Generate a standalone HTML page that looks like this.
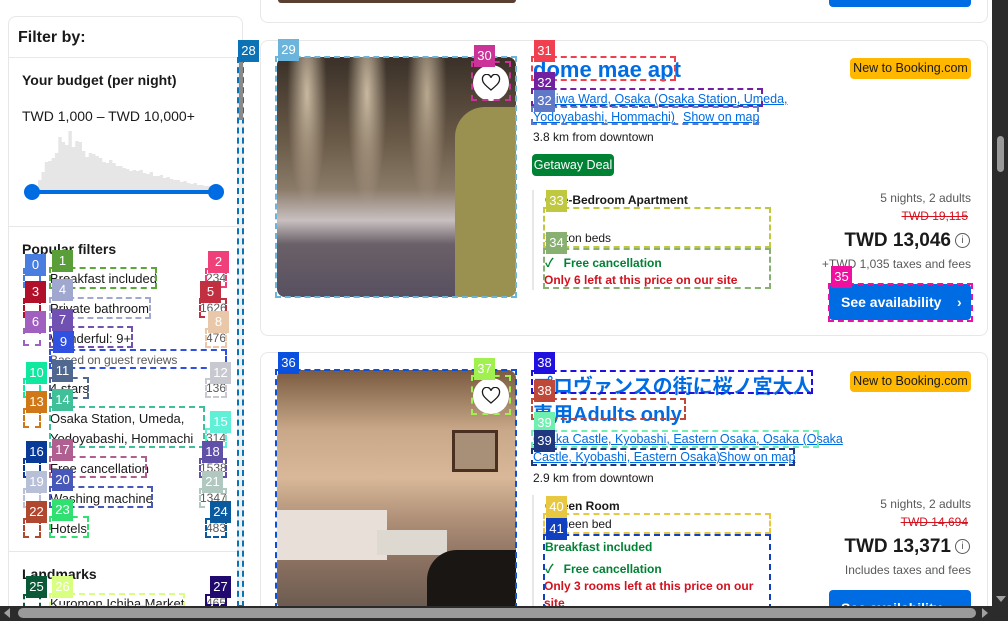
<!DOCTYPE html>
<html style="overflow:hidden;height:621px"><head><meta charset="utf-8">
<style>
*{box-sizing:border-box;margin:0;padding:0}
body{width:1008px;height:621px;overflow:hidden;background:#fff;font-family:"Liberation Sans","Noto Sans CJK JP",sans-serif;color:#1a1a1a;position:relative}
.a{position:absolute;white-space:nowrap}
.lb{position:absolute;width:21px;height:22px;color:#fff;font-size:13px;line-height:22px;text-align:center;z-index:5}
.bx{position:absolute;border:2px dashed;z-index:4}
.t{font-size:13px}
.b{font-weight:bold}
.lnk{color:#006ce4;text-decoration:underline;font-size:12.5px}
.gr{color:#595959;font-size:12px}
.grn{color:#008234;font-weight:bold;font-size:12px}
.red{color:#d4111e;font-weight:bold;font-size:12px}
.btn{position:absolute;background:#006ce4;color:#fff;font-weight:bold;font-size:14px;border-radius:4px;padding-left:12px;line-height:36px}
.badge{position:absolute;background:#ffb700;border-radius:4px;font-size:12.5px;color:#1a1a1a;text-align:center;line-height:21px}
.heart{position:absolute;width:36px;height:36px;border-radius:50%;background:#fff;z-index:3}
</style></head><body>

<div class="a" style="left:260px;top:-20px;width:728px;height:43px;border:1px solid #e7e7e7;border-radius:8px"></div>
<div class="a" style="left:278px;top:0;width:238px;height:3px;background:#5a4030;border-radius:0 0 6px 6px"></div>
<div class="a" style="left:829px;top:0;width:142px;height:7px;background:#006ce4;border-radius:0 0 4px 4px"></div>

<div class="a" style="left:8px;top:16px;width:235px;height:620px;border:1px solid #e7e7e7;border-radius:8px"></div>
<div class="a b" style="left:18px;top:29px;font-size:16px">Filter by:</div>
<div class="a" style="left:9px;top:57px;width:233px;height:1px;background:#e7e7e7"></div>
<div class="a b" style="left:22px;top:72px;font-size:14px">Your budget (per night)</div>
<div class="a" style="left:22px;top:108px;font-size:14px">TWD 1,000 – TWD 10,000+</div>
<svg class="a" style="left:38px;top:128px" width="186" height="64" viewBox="0 0 165 64" preserveAspectRatio="none">
<path fill="#e6e6e6" d="M0 64V52h3V44h3V34h3V33h3V30h3V25h3V9h3V14h3V17h3V3h3V19h3V13h3V14h3V23h3V29h3V25h3V26h3V28h3V30h3V34h3V35h3V32h3V35h3V38h3V38h3V40h3V41h3V43h3V42h3V43h3V42h3V45h3V46h3V44h3V48h3V48h3V47h3V50h3V49h3V51h3V52h3V52h3V54h3V53h3V55h3V56h3V55h3V57h3V57h3V58h3V58h3V59h3V59h3V60h3V60h3V61h3V61h3V61h3V62h3V62h3V62h3V64z"/>
</svg>
<div class="a" style="left:32px;top:190px;width:184px;height:4px;background:#006ce4"></div>
<div class="a" style="left:24px;top:184px;width:16px;height:16px;border-radius:50%;background:#006ce4"></div>
<div class="a" style="left:208px;top:184px;width:16px;height:16px;border-radius:50%;background:#006ce4"></div>
<div class="a" style="left:9px;top:226px;width:233px;height:1px;background:#e7e7e7"></div>
<div class="a b" style="left:22px;top:241px;font-size:14px">Popular filters</div>
<div class="a t" style="left:50px;top:271px">Breakfast included</div>
<div class="a t" style="left:50px;top:301px">Private bathroom</div>
<div class="a t" style="left:50px;top:331px">Wonderful: 9+</div>
<div class="a" style="left:50px;top:353px;font-size:12px;color:#595959">Based on guest reviews</div>
<div class="a t" style="left:50px;top:381px">4 stars</div>
<div class="a t" style="left:50px;top:411px">Osaka Station, Umeda,</div>
<div class="a t" style="left:50px;top:431px">Yodoyabashi, Hommachi</div>
<div class="a t" style="left:50px;top:461px">Free cancellation</div>
<div class="a t" style="left:50px;top:491px">Washing machine</div>
<div class="a t" style="left:50px;top:521px">Hotels</div>
<div class="a t" style="left:206px;top:271px;color:#595959;font-size:12px">234</div>
<div class="a t" style="left:200px;top:301px;color:#595959;font-size:12px">1626</div>
<div class="a t" style="left:206px;top:331px;color:#595959;font-size:12px">476</div>
<div class="a t" style="left:206px;top:381px;color:#595959;font-size:12px">136</div>
<div class="a t" style="left:206px;top:431px;color:#595959;font-size:12px">314</div>
<div class="a t" style="left:200px;top:461px;color:#595959;font-size:12px">1538</div>
<div class="a t" style="left:200px;top:491px;color:#595959;font-size:12px">1347</div>
<div class="a t" style="left:206px;top:521px;color:#595959;font-size:12px">483</div>
<div class="a" style="left:9px;top:551px;width:233px;height:1px;background:#e7e7e7"></div>
<div class="a b" style="left:22px;top:566px;font-size:14px">Landmarks</div>
<div class="a t" style="left:50px;top:596px">Kuromon Ichiba Market</div>
<div class="a t" style="left:206px;top:596px;color:#595959;font-size:12px">465</div>

<div class="a" style="left:237px;top:57px;width:7px;height:550px;border:2px dashed #0b72b5;background:#f0f0f0"></div>
<div class="a" style="left:239px;top:60px;width:4px;height:60px;background:#8a8a8a"></div>

<div class="a" style="left:260px;top:40px;width:728px;height:296px;border:1px solid #e7e7e7;border-radius:8px"></div>
<div class="a" style="left:277px;top:57px;width:239px;height:240px;border-radius:8px;overflow:hidden;background:linear-gradient(180deg,#3a3028 0%,#6a5a48 35%,#8a7a68 55%,#c8c0c0 68%,#6a6068 78%,#585060 100%)">
 <div style="position:absolute;left:178px;top:50px;width:62px;height:190px;background:#9a9050;border-radius:30px 0 0 0"></div>
 <div style="position:absolute;left:10px;top:0;width:40px;height:150px;background:radial-gradient(ellipse at 50% 25%,#c8b8a0,transparent 70%)"></div>
 <div style="position:absolute;left:70px;top:0;width:40px;height:150px;background:radial-gradient(ellipse at 50% 25%,#c8b8a0,transparent 70%)"></div>
 <div style="position:absolute;left:130px;top:0;width:40px;height:150px;background:radial-gradient(ellipse at 50% 25%,#b8a890,transparent 70%)"></div>
</div>
<div class="heart" style="left:473px;top:65px"></div>
<svg class="a" style="left:481px;top:74px;z-index:3" width="20" height="18"><path d="M10 16C4 11 1.5 8.5 1.5 5.5A4 4 0 0 1 10 3.8 4 4 0 0 1 18.5 5.5C18.5 8.5 16 11 10 16z" fill="none" stroke="#1a1a1a" stroke-width="1.3"/></svg>
<div class="a b" style="left:533px;top:57px;font-size:22px;color:#006ce4">dome mae apt</div>
<div class="badge" style="left:850px;top:58px;width:121px">New to Booking.com</div>
<div class="a lnk" style="left:533px;top:92px">Naniwa Ward, Osaka (Osaka Station, Umeda,</div>
<div class="a lnk" style="left:533px;top:110px">Yodoyabashi, Hommachi)</div>
<div class="a lnk" style="left:683px;top:110px">Show on map</div>
<div class="a gr" style="left:533px;top:130px;color:#1a1a1a">3.8 km from downtown</div>
<div class="a" style="left:532px;top:154px;width:82px;height:22px;background:#008234;border-radius:4px;color:#fff;font-size:12.5px;line-height:22px;text-align:center">Getaway Deal</div>
<div class="a" style="left:532px;top:190px;width:2px;height:100px;background:#e7e7e7"></div>
<div class="a b" style="left:545px;top:193px;font-size:12px">One-Bedroom Apartment</div>
<div class="a" style="left:545px;top:231px;font-size:12px">2 futon beds</div>
<div class="a grn" style="left:545px;top:254px">✓&nbsp;&nbsp; Free cancellation</div>
<div class="a red" style="left:544px;top:273px">Only 6 left at this price on our site</div>
<div class="a gr" style="right:37px;top:191px">5 nights, 2 adults</div>
<div class="a" style="right:40px;top:209px;font-size:12px;color:#d4111e;text-decoration:line-through">TWD 19,115</div>
<div class="a b" style="right:57px;top:230px;font-size:19px">TWD 13,046</div>
<div class="a" style="left:955px;top:233px;width:15px;height:15px;border:1px solid #595959;border-radius:50%;font-size:10px;line-height:13px;text-align:center;color:#595959">i</div>
<div class="a gr" style="right:37px;top:257px">+TWD 1,035 taxes and fees</div>
<div class="btn" style="left:829px;top:284px;width:142px;height:36px">See availability&nbsp;&nbsp;&nbsp; ›</div>

<div class="a" style="left:260px;top:352px;width:728px;height:300px;border:1px solid #e7e7e7;border-radius:8px"></div>
<div class="a" style="left:277px;top:370px;width:239px;height:240px;border-radius:8px;overflow:hidden;background:linear-gradient(180deg,#7a5a40 0%,#c8a888 25%,#d8b898 45%,#b09078 62%,#8a7060 80%,#6a5a50 100%)">
 <div style="position:absolute;left:0;top:140px;width:110px;height:50px;background:#e8e0d8"></div>
 <div style="position:absolute;left:100px;top:160px;width:70px;height:25px;background:#ddd8d0"></div>
 <div style="position:absolute;left:150px;top:180px;width:100px;height:70px;background:#1a1614;border-radius:30px 0 0 0"></div>
 <div style="position:absolute;left:175px;top:60px;width:46px;height:42px;border:3px solid #4a3020;background:#a89078"></div>
</div>
<div class="heart" style="left:473px;top:378px"></div>
<svg class="a" style="left:481px;top:387px;z-index:3" width="20" height="18"><path d="M10 16C4 11 1.5 8.5 1.5 5.5A4 4 0 0 1 10 3.8 4 4 0 0 1 18.5 5.5C18.5 8.5 16 11 10 16z" fill="none" stroke="#1a1a1a" stroke-width="1.3"/></svg>
<div class="a b" style="left:533px;top:370px;font-size:20px;color:#006ce4">プロヴァンスの街に桜ノ宮大人</div>
<div class="a b" style="left:533px;top:398px;font-size:20px;color:#006ce4">専用Adults only</div>
<div class="badge" style="left:850px;top:371px;width:121px">New to Booking.com</div>
<div class="a lnk" style="left:533px;top:432px">Osaka Castle, Kyobashi, Eastern Osaka, Osaka (Osaka</div>
<div class="a lnk" style="left:533px;top:450px">Castle, Kyobashi, Eastern Osaka)</div>
<div class="a lnk" style="left:719px;top:450px">Show on map</div>
<div class="a gr" style="left:533px;top:471px;color:#1a1a1a">2.9 km from downtown</div>
<div class="a" style="left:532px;top:495px;width:2px;height:120px;background:#e7e7e7"></div>
<div class="a b" style="left:545px;top:499px;font-size:12px">Queen Room</div>
<div class="a" style="left:545px;top:517px;font-size:12px">1 queen bed</div>
<div class="a grn" style="left:545px;top:540px">Breakfast included</div>
<div class="a grn" style="left:545px;top:560px">✓&nbsp;&nbsp; Free cancellation</div>
<div class="a red" style="left:544px;top:579px">Only 3 rooms left at this price on our</div>
<div class="a red" style="left:544px;top:596px">site</div>
<div class="a gr" style="right:37px;top:497px">5 nights, 2 adults</div>
<div class="a" style="right:40px;top:515px;font-size:12px;color:#d4111e;text-decoration:line-through">TWD 14,694</div>
<div class="a b" style="right:57px;top:536px;font-size:19px">TWD 13,371</div>
<div class="a" style="left:955px;top:539px;width:15px;height:15px;border:1px solid #595959;border-radius:50%;font-size:10px;line-height:13px;text-align:center;color:#595959">i</div>
<div class="a gr" style="right:37px;top:563px">Includes taxes and fees</div>
<div class="btn" style="left:829px;top:590px;width:142px;height:36px">See availability&nbsp;&nbsp;&nbsp; ›</div>

<div class="bx" style="left:23px;top:268px;width:18px;height:20px;border-color:#4a7de0"></div>
<div class="bx" style="left:49px;top:267px;width:108px;height:22px;border-color:#5aa83a"></div>
<div class="bx" style="left:205px;top:268px;width:22px;height:20px;border-color:#f0407a"></div>
<div class="bx" style="left:23px;top:298px;width:18px;height:20px;border-color:#b0102a"></div>
<div class="bx" style="left:49px;top:297px;width:102px;height:22px;border-color:#a0a8d0"></div>
<div class="bx" style="left:199px;top:298px;width:28px;height:20px;border-color:#c03040"></div>
<div class="bx" style="left:23px;top:328px;width:18px;height:18px;border-color:#a060c0"></div>
<div class="bx" style="left:49px;top:326px;width:84px;height:22px;border-color:#7050b0"></div>
<div class="bx" style="left:205px;top:328px;width:22px;height:20px;border-color:#e8c8a8"></div>
<div class="bx" style="left:49px;top:349px;width:178px;height:20px;border-color:#3050e0"></div>
<div class="bx" style="left:23px;top:378px;width:18px;height:20px;border-color:#10e8a0"></div>
<div class="bx" style="left:49px;top:377px;width:40px;height:22px;border-color:#506890"></div>
<div class="bx" style="left:205px;top:378px;width:22px;height:20px;border-color:#c8c8d0"></div>
<div class="bx" style="left:23px;top:408px;width:18px;height:20px;border-color:#d07818"></div>
<div class="bx" style="left:49px;top:406px;width:156px;height:42px;border-color:#40c098"></div>
<div class="bx" style="left:205px;top:428px;width:22px;height:20px;border-color:#60f0d8"></div>
<div class="bx" style="left:23px;top:458px;width:18px;height:20px;border-color:#0a3a98"></div>
<div class="bx" style="left:49px;top:456px;width:98px;height:22px;border-color:#b06090"></div>
<div class="bx" style="left:199px;top:458px;width:28px;height:20px;border-color:#6050a8"></div>
<div class="bx" style="left:23px;top:488px;width:18px;height:20px;border-color:#b8c0d8"></div>
<div class="bx" style="left:49px;top:486px;width:104px;height:22px;border-color:#4858b8"></div>
<div class="bx" style="left:199px;top:488px;width:28px;height:20px;border-color:#b0c8c0"></div>
<div class="bx" style="left:23px;top:518px;width:18px;height:20px;border-color:#b04830"></div>
<div class="bx" style="left:49px;top:516px;width:40px;height:22px;border-color:#30e070"></div>
<div class="bx" style="left:205px;top:518px;width:22px;height:20px;border-color:#0a5aa0"></div>
<div class="bx" style="left:23px;top:594px;width:18px;height:14px;border-color:#0a5a38"></div>
<div class="bx" style="left:49px;top:593px;width:136px;height:14px;border-color:#d8ff80"></div>
<div class="bx" style="left:205px;top:594px;width:22px;height:12px;border-color:#200a70"></div>
<div class="bx" style="left:275px;top:56px;width:242px;height:242px;border-color:#6bb5dc"></div>
<div class="bx" style="left:471px;top:61px;width:40px;height:40px;border-color:#cc3399"></div>
<div class="bx" style="left:531px;top:56px;width:145px;height:25px;border-color:#f04050"></div>
<div class="bx" style="left:531px;top:88px;width:232px;height:19px;border-color:#7020a0"></div>
<div class="bx" style="left:531px;top:106px;width:228px;height:19px;border-color:#6078c8"></div>
<div class="bx" style="left:543px;top:207px;width:228px;height:41px;border-color:#c0c840"></div>
<div class="bx" style="left:543px;top:248px;width:228px;height:41px;border-color:#88b070"></div>
<div class="bx" style="left:828px;top:283px;width:145px;height:39px;border-color:#f010a0"></div>
<div class="bx" style="left:275px;top:369px;width:242px;height:240px;border-color:#0a50e0"></div>
<div class="bx" style="left:471px;top:375px;width:40px;height:40px;border-color:#a0f050"></div>
<div class="bx" style="left:531px;top:370px;width:282px;height:24px;border-color:#2010e0"></div>
<div class="bx" style="left:531px;top:398px;width:155px;height:22px;border-color:#c04838"></div>
<div class="bx" style="left:531px;top:430px;width:288px;height:18px;border-color:#70f0b0"></div>
<div class="bx" style="left:531px;top:448px;width:264px;height:18px;border-color:#203880"></div>
<div class="bx" style="left:543px;top:513px;width:228px;height:21px;border-color:#e8c840"></div>
<div class="bx" style="left:543px;top:534px;width:228px;height:76px;border-color:#1040c0"></div>

<div class="lb" style="left:25px;top:254px;background:#4a7de0">0</div>
<div class="lb" style="left:52px;top:250px;background:#5a9e3a">1</div>
<div class="lb" style="left:208px;top:251px;background:#f0407a">2</div>
<div class="lb" style="left:25px;top:281px;background:#b0102a">3</div>
<div class="lb" style="left:52px;top:279px;background:#a0a8d0">4</div>
<div class="lb" style="left:200px;top:281px;background:#c03040">5</div>
<div class="lb" style="left:25px;top:311px;background:#a060c0">6</div>
<div class="lb" style="left:52px;top:309px;background:#7050b0">7</div>
<div class="lb" style="left:208px;top:311px;background:#e8c8a8">8</div>
<div class="lb" style="left:53px;top:331px;background:#3050e0">9</div>
<div class="lb" style="left:26px;top:362px;background:#10e8a0">10</div>
<div class="lb" style="left:52px;top:360px;background:#506890">11</div>
<div class="lb" style="left:210px;top:362px;background:#c8c8d0">12</div>
<div class="lb" style="left:26px;top:391px;background:#d07818">13</div>
<div class="lb" style="left:52px;top:389px;background:#40c098">14</div>
<div class="lb" style="left:210px;top:411px;background:#60f0d8">15</div>
<div class="lb" style="left:26px;top:441px;background:#0a3a98">16</div>
<div class="lb" style="left:52px;top:439px;background:#b06090">17</div>
<div class="lb" style="left:202px;top:441px;background:#6050a8">18</div>
<div class="lb" style="left:26px;top:471px;background:#b8c0d8">19</div>
<div class="lb" style="left:52px;top:469px;background:#4858b8">20</div>
<div class="lb" style="left:202px;top:471px;background:#b0c8c0">21</div>
<div class="lb" style="left:26px;top:501px;background:#b04830">22</div>
<div class="lb" style="left:52px;top:499px;background:#30e070">23</div>
<div class="lb" style="left:210px;top:501px;background:#0a5aa0">24</div>
<div class="lb" style="left:26px;top:576px;background:#0a5a38">25</div>
<div class="lb" style="left:52px;top:576px;background:#d8ff80">26</div>
<div class="lb" style="left:210px;top:576px;background:#200a70">27</div>
<div class="lb" style="left:238px;top:40px;background:#0b72b5">28</div>
<div class="lb" style="left:278px;top:39px;background:#6bb5dc">29</div>
<div class="lb" style="left:474px;top:45px;background:#cc3399">30</div>
<div class="lb" style="left:534px;top:40px;background:#f04050">31</div>
<div class="lb" style="left:534px;top:72px;background:#7020a0">32</div>
<div class="lb" style="left:534px;top:90px;background:#6078c8">32</div>
<div class="lb" style="left:546px;top:190px;background:#c0c840">33</div>
<div class="lb" style="left:546px;top:232px;background:#88b070">34</div>
<div class="lb" style="left:831px;top:266px;background:#f010a0">35</div>
<div class="lb" style="left:278px;top:352px;background:#0a50e0">36</div>
<div class="lb" style="left:474px;top:358px;background:#a0f050">37</div>
<div class="lb" style="left:534px;top:352px;background:#2010e0">38</div>
<div class="lb" style="left:534px;top:380px;background:#c04838">38</div>
<div class="lb" style="left:534px;top:412px;background:#70f0b0">39</div>
<div class="lb" style="left:534px;top:430px;background:#203880">39</div>
<div class="lb" style="left:546px;top:496px;background:#e8c840">40</div>
<div class="lb" style="left:546px;top:518px;background:#1040c0">41</div>

<div class="a" style="left:992px;top:0;width:16px;height:621px;background:#2b2b2b;z-index:6"></div>
<div class="a" style="left:997px;top:136px;width:7px;height:36px;background:#9a9a9a;border-radius:4px;z-index:7"></div>
<div class="a" style="left:996px;top:596px;width:0;height:0;border-left:5px solid transparent;border-right:5px solid transparent;border-top:6px solid #a0a0a0;z-index:7"></div>
<div class="a" style="left:0;top:606px;width:1008px;height:15px;background:#2b2b2b;z-index:6"></div>
<div class="a" style="left:18px;top:608px;width:958px;height:10px;background:#9a9a9a;border-radius:5px;z-index:7"></div>
<div class="a" style="left:4px;top:608px;width:0;height:0;border-top:5px solid transparent;border-bottom:5px solid transparent;border-right:6px solid #a0a0a0;z-index:7"></div>
<div class="a" style="left:982px;top:608px;width:0;height:0;border-top:5px solid transparent;border-bottom:5px solid transparent;border-left:6px solid #a0a0a0;z-index:7"></div>
</body></html>
